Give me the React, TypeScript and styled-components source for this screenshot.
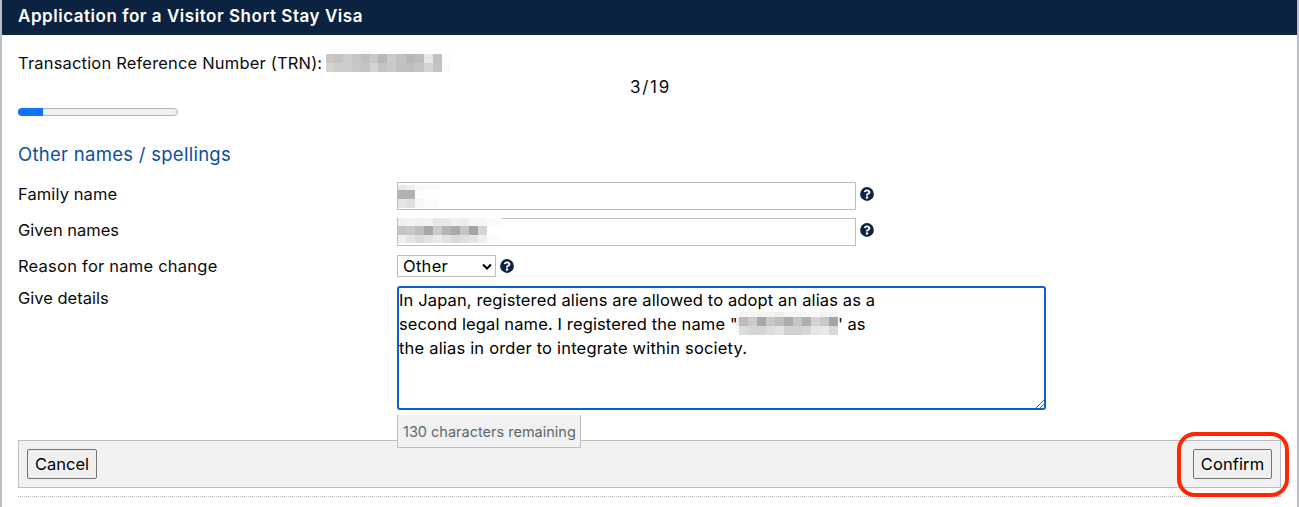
import React from "react";
import styled, { createGlobalStyle } from "styled-components";

const GlobalStyle = createGlobalStyle`
  * { box-sizing: border-box; }
  body {
    margin: 0;
    overflow: hidden;
    background: #fff;
    color: #0b0c0c;
    font: 400 16.5px/24px Inter, "Liberation Sans", sans-serif;
  }
`;

const Page = styled.div`
  height: 507px;
  border: solid #bdbdca;
  border-width: 0 2px;
  overflow: hidden;
`;

const Header = styled.header`
  height: 35px;
  padding: 4px 16px 0;
  background: #0b2341;
  color: #fff;
  font-size: 17px;
  font-weight: 600;
  white-space: nowrap;
`;

const Content = styled.main`
  padding: 16px 16px 0;
`;

const Text = styled.span<{ $tracking?: number }>`
  white-space: pre;
  letter-spacing: ${(p) => p.$tracking ?? 0}px;
`;

const Reference = styled.div`
  display: flex;
  height: 24px;
`;

const ReferenceLabel = styled.div`
  width: 303px;
`;

const MosaicSvg = styled.svg<{ $left?: number; $top?: number }>`
  display: block;
  flex: none;
  margin-left: ${(p) => p.$left ?? 0}px;
  margin-top: ${(p) => p.$top ?? 0}px;
`;

const PageCount = styled.div`
  height: 24px;
  padding-left: 2px;
  font-size: 17px;
  line-height: 25px;
  text-align: center;
`;

const Track = styled.div`
  width: 160px;
  height: 8px;
  margin-top: 9px;
  border: 1px solid #b3b3b3;
  border-radius: 4px;
  background: #efefef;
`;

const Fill = styled.div`
  width: 25px;
  height: 8px;
  margin: -1px 0 0 -1px;
  border-radius: 4px 0 0 4px;
  background: #0f75ff;
`;

const SectionTitle = styled.h2`
  margin: 24px 0 0;
  height: 29px;
  font-size: 18.5px;
  font-weight: 400;
  line-height: 28px;
  color: #0b4fa0;
`;

const Row = styled.div<{ $height: number; $top?: number }>`
  display: grid;
  grid-template-columns: 379px 1fr;
  height: ${(p) => p.$height}px;
  margin-top: ${(p) => p.$top ?? 0}px;
`;

const Control = styled.div<{ $top?: number }>`
  display: flex;
  align-items: flex-start;
  padding-top: ${(p) => p.$top ?? 0}px;
`;

const Input = styled.div`
  width: 459px;
  height: 28px;
  border: 1px solid #bdbdc7;
  background: #fff;
`;

const Select = styled.div`
  display: flex;
  justify-content: space-between;
  width: 99px;
  height: 22px;
  padding: 0 3px 0 5px;
  border: 1px solid #bdbdc7;
  line-height: 20px;
  color: #000;
`;

const HelpSvg = styled.svg<{ $top: number }>`
  margin: ${(p) => p.$top}px 0 0 4px;
`;

const TextBox = styled.div`
  position: relative;
  width: 649px;
  height: 124px;
  border: 2px solid #0f5fca;
  border-radius: 3px;
  color: #000;
`;

const Line = styled.div`
  display: flex;
  height: 24px;
`;

const LineStart = styled.div`
  width: 337px;
`;

const Grip = styled.svg`
  position: absolute;
  right: 0;
  bottom: 0;
`;

const Remaining = styled.div`
  position: relative;
  width: 184px;
  height: 33px;
  margin: 5px 0 0 379px;
  padding: 5px 0 0 5px;
  border: 1px solid #bdbdc7;
  border-top: 0;
  background: #f1f1f1;
  color: #5c686f;
  font-size: 14.5px;
`;

const Footer = styled.footer`
  display: flex;
  justify-content: space-between;
  height: 48px;
  margin-top: -8px;
  padding: 8px;
  border: 1px solid #bdbdc7;
  background: #f1f1f1;
`;

const Button = styled.button<{ $width: number }>`
  width: ${(p) => p.$width}px;
  height: 30px;
  padding: 0;
  border: 1px solid #737373;
  border-radius: 2px;
  background: #f0f0f0;
  color: #000;
  font: inherit;
`;

const ButtonSlot = styled.div`
  position: relative;
  height: 30px;
`;

const Highlight = styled.div`
  position: absolute;
  top: -17px;
  left: -16px;
  width: 112px;
  height: 65px;
  border: 4px solid #ff2600;
  border-radius: 18px;
`;

const Divider = styled.div`
  margin-top: 8px;
  border-top: 1px dotted #b5b5c2;
`;

type MosaicProps = {
  width: number;
  height: number;
  cols: number[];
  rows: { y: number; h: number; tones: string[] }[];
  left?: number;
  top?: number;
};

const Mosaic = ({ width, height, cols, rows, left, top }: MosaicProps) => (
  <MosaicSvg width={width} height={height} $left={left} $top={top} shapeRendering="crispEdges">
    {rows.flatMap((r) =>
      r.tones.map((t, i) => (
        <rect key={`${r.y}-${i}`} x={cols[i]} y={r.y} width={(cols[i + 1] ?? width) - cols[i]} height={r.h} fill={`#${t}`} />
      ))
    )}
  </MosaicSvg>
);

const Help = ({ top = 5 }: { top?: number }) => (
  <HelpSvg $top={top} width="14" height="14" viewBox="0 0 512 512">
    <circle cx="256" cy="256" r="252" fill="#0b2341" />
    <path
      d="M262.7 90c-54.500 0-89.300 23-116.500 63.800-3.500 5.300-2.400 12.400 2.700 16.300l34.700 26.300c5.200 3.900 12.600 3 16.700-2.100 17.900-22.700 30.100-35.800 57.300-35.800 20.400 0 45.700 13.100 45.700 33 0 15-12.400 22.700-32.500 34C247.100 238.500 216 254.900 216 296v4c0 6.600 5.400 12 12 12h56c6.600 0 12-5.400 12-12v-1.300c0-28.500 83.200-29.600 83.200-106.700 0-58-60.200-102-116.500-102zM256 338c-25.400 0-46 20.600-46 46s20.600 46 46 46 46-20.600 46-46-20.600-46-46-46z"
      fill="#fff"
    />
  </HelpSvg>
);

const nineStep = [0, 8, 17, 26, 35, 44, 52, 61, 70, 80, 89, 98, 107, 116];

export default function App() {
  return (
    <>
      <GlobalStyle />
      <Page>
        <Header><Text $tracking={0.53}>Application for a Visitor Short Stay Visa</Text></Header>
        <Content>
          <Reference>
            <ReferenceLabel><Text $tracking={0.18}>Transaction Reference Number (TRN):</Text></ReferenceLabel>
            <Mosaic
              width={125} height={24} left={5} top={-1} cols={nineStep}
              rows={[
                { y: 0, h: 4, tones: ["fff", "fdfdfd", "fff", "fefefe", "fafafa", "fbfbfb", "fff", "fefefe", "fcfcfc", "fff", "fdfdfd", "fff", "fff", "fff"] },
                { y: 4, h: 9, tones: ["c9c9c9", "c4c4c4", "cbcbcb", "c6c6c6", "bfbfbf", "c8c8c8", "b7b7b7", "cacaca", "c2c2c2", "b7b7b7", "bdbdbd", "e7e7e7", "c1c1c1", "fcfcfc"] },
                { y: 13, h: 9, tones: ["d3d3d3", "cbcbcb", "cccccc", "c7c7c7", "c4c4c4", "d5d5d5", "c3c3c3", "c9c9c9", "c1c1c1", "bfbfbf", "c3c3c3", "d4d4d4", "c4c4c4", "fafafa"] },
              ]}
            />
          </Reference>
          <PageCount><Text $tracking={1.7}>3/19</Text></PageCount>
          <Track><Fill /></Track>
          <SectionTitle><Text $tracking={0.28}>Other names / spellings</Text></SectionTitle>
          <Row $height={36} $top={13}>
            <Text $tracking={0.1}>Family name</Text>
            <Control>
              <Input>
                <Mosaic
                  width={41} height={26} top={2} cols={[0, 8, 17, 26]}
                  rows={[
                    { y: 0, h: 5, tones: ["e7eae9", "eef0ef", "f7f9f8", "f8faf9"] },
                    { y: 5, h: 9, tones: ["b2b2b2", "b2b2b2", "fdfdfd", "fff"] },
                    { y: 14, h: 9, tones: ["e5e5e5", "e0e0e0", "f7f7f7", "fbfbfb"] },
                  ]}
                />
              </Input>
              <Help />
            </Control>
          </Row>
          <Row $height={36}>
            <Text>Given names</Text>
            <Control>
              <Input>
                <Mosaic
                  width={104} height={26} top={-1} cols={[0, 8, 17, 26, 35, 44, 53, 62, 71, 80, 89]}
                  rows={[
                    { y: 0, h: 8, tones: ["f0f0f0", "f3f3f3", "f0f0f0", "f3f3f3", "e8e8e8", "e8e8e8", "f0f0f0", "ececec", "f4f6f5", "f3f5f5", "fafafa"] },
                    { y: 8, h: 9, tones: ["c5c5c5", "c8c8c8", "bebebe", "a8a8a5", "cbcbcb", "b4b4b4", "a9a9a9", "c5c5c5", "a4a4a4", "d5d5d5", "fff"] },
                    { y: 17, h: 8, tones: ["eeeef0", "e5e5e5", "dcdcdc", "e2e2e2", "eaeaea", "e2e2e2", "dadada", "dfdfdf", "e4e4e4", "f0f0f0", "fbfbfb"] },
                  ]}
                />
              </Input>
              <Help />
            </Control>
          </Row>
          <Row $height={32}>
            <Text $tracking={0.23}>Reason for name change</Text>
            <Control $top={1}>
              <Select>
                <Text $tracking={0.3}>Other</Text>
                <svg width="10" height="20"><path d="M1 8.500 5 12.500 9 8.500" fill="none" stroke="#000" strokeWidth="2" /></svg>
              </Select>
              <Help top={4} />
            </Control>
          </Row>
          <Row $height={124}>
            <Text>Give details</Text>
            <TextBox>
              <Line><Text $tracking={0.13}>In Japan, registered aliens are allowed to adopt an alias as a</Text></Line>
              <Line>
                <LineStart><Text $tracking={0.12}>second legal name. I registered the name "</Text></LineStart>
                <Mosaic
                  width={102} height={26} cols={[0, 3, 12, 21, 30, 39, 48, 57, 66, 75, 84, 93]}
                  rows={[
                    { y: 0, h: 5, tones: ["f7f7f7", "f3f3f3", "f5f5f5", "f4f4f4", "f3f3f3", "ededed", "f7f7f7", "f3f3f3", "f7f7f7", "f9f9f9", "f3f3f3", "f3f3f3"] },
                    { y: 5, h: 9, tones: ["eee", "bcbcbc", "cbcbcb", "a9a9a9", "c8c8c8", "bdbdbd", "acacac", "c6c6c6", "afafaf", "d3d3d3", "c8c8c8", "a5a5a5"] },
                    { y: 14, h: 9, tones: ["f7f7f7", "dcdcdc", "d5d5d5", "d5d5d5", "dedede", "e3e3e3", "d1d1d1", "d1d1d1", "d7d7d7", "e5e5e5", "e9e9e9", "d8d8d8"] },
                  ]}
                />
                <Text>' as</Text>
              </Line>
              <Line><Text $tracking={0.19}>the alias in order to integrate within society.</Text></Line>
              <Grip width="8" height="8"><path d="M0 8 8 0M4 8 8 4" stroke="#666" strokeWidth="1" /></Grip>
            </TextBox>
          </Row>
          <Remaining><Text>130 characters remaining</Text></Remaining>
          <Footer>
            <Button $width={70}><Text>Cancel</Text></Button>
            <ButtonSlot>
              <Button $width={79}><Text $tracking={0.1}>Confirm</Text></Button>
              <Highlight />
            </ButtonSlot>
          </Footer>
          <Divider />
        </Content>
      </Page>
    </>
  );
}
